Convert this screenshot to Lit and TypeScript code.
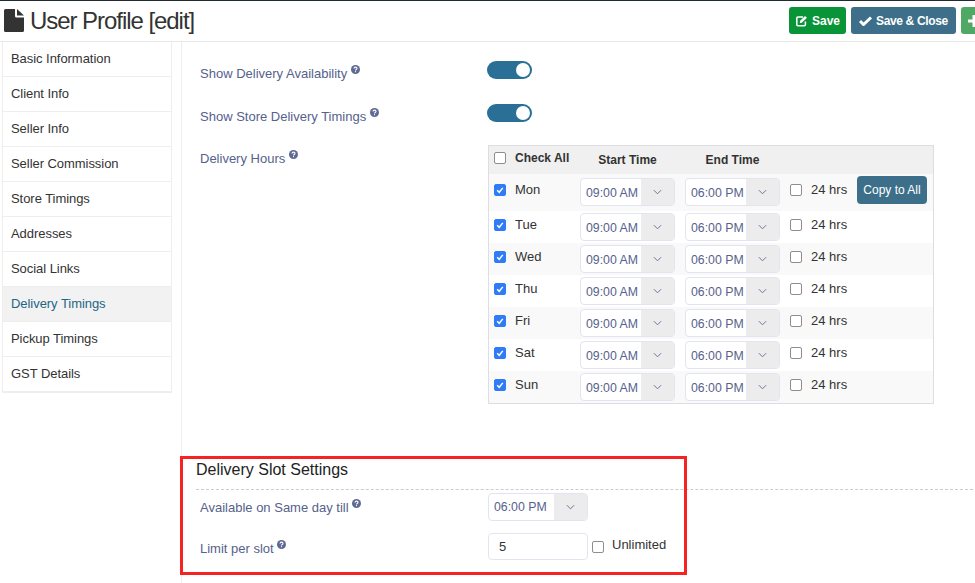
import { LitElement, html, css, svg } from "lit";
import { customElement } from "lit/decorators.js";

const tabs = [
  "Basic Information",
  "Client Info",
  "Seller Info",
  "Seller Commission",
  "Store Timings",
  "Addresses",
  "Social Links",
  "Delivery Timings",
  "Pickup Timings",
  "GST Details",
];
const days = ["Mon", "Tue", "Wed", "Thu", "Fri", "Sat", "Sun"];

const help = html`<svg class="help" viewBox="0 0 10 10" width="9" height="9">
  <circle cx="5" cy="5" r="5" fill="#5f6a94"></circle>
  <path d="M3.3 3.9C3.4 2.9 4.1 2.4 5 2.4c1 0 1.7.6 1.7 1.4 0 1.3-1.700 1.200-1.700 2.400" fill="none" stroke="#fff" stroke-width="1.2"></path>
  <rect x="4.4" y="6.8" width="1.2" height="1.2" fill="#fff"></rect>
</svg>`;

const chevron = svg`<path d="M1 1l4 4 4-4" fill="none" stroke="#6a7396" stroke-width="1.1"></path>`;

@customElement("app-root")
export class AppRoot extends LitElement {
  static styles = css`
    :host {
      display: block;
      width: 975px;
      height: 583px;
      overflow: hidden;
      position: relative;
      background: #fff;
      color: #333;
      font-family: "Liberation Sans", Arial, sans-serif;
      font-size: 13px;
      border-top: 1px solid #1f2d33;
      box-sizing: border-box;
    }
    .top {
      display: flex;
      align-items: center;
      height: 40px;
      border-bottom: 1px solid #e8e8e8;
      padding-left: 4px;
      box-sizing: content-box;
    }
    .doc {
      flex: none;
      margin-right: 6px;
      margin-top: -1px;
    }
    h1 {
      margin: 0;
      font-size: 24px;
      font-weight: 400;
      letter-spacing: -1.05px;
      color: #333;
      flex: 1;
      white-space: nowrap;
    }
    .actions {
      display: flex;
      gap: 5px;
      margin-right: -14px;
      margin-top: -1px;
    }
    .btn {
      display: flex;
      align-items: center;
      gap: 5px;
      height: 27px;
      padding: 0 6px 0 7px;
      border-radius: 3px;
      color: #fff;
      font-size: 12px;
      font-weight: 700;
      white-space: nowrap;
      box-sizing: border-box;
    }
    .save {
      background: #0a9438;
      width: 57px;
    }
    .close {
      background: #3d6f8a;
      width: 105px;
      padding-left: 8px;
      gap: 4px;
      letter-spacing: -0.35px;
    }
    .plus {
      background: #4fa863;
      width: 28px;
    }
    .body {
      display: flex;
    }
    .side {
      flex: none;
      width: 170px;
      margin-left: 2px;
      border: 1px solid #eee;
      border-top: 0;
      border-bottom-width: 2px;
      box-sizing: border-box;
      align-self: flex-start;
    }
    .tab {
      height: 35px;
      display: flex;
      align-items: center;
      padding-left: 8px;
      padding-bottom: 1px;
      box-sizing: border-box;
      border-bottom: 1px solid #eee;
      letter-spacing: -0.05px;
    }
    .tab:last-child {
      border-bottom: 0;
      height: 34px;
    }
    .tab.on {
      background: #f2f2f2;
      color: #1f6587;
    }
    .main {
      flex: none;
      width: 794px;
      height: 541px;
      margin-left: 9px;
      border-left: 1px solid #eee;
      box-sizing: border-box;
      padding-top: 19px;
      overflow: hidden;
    }
    .row {
      display: grid;
      grid-template-columns: 288px auto;
      padding-left: 18px;
    }
    .lab {
      color: #56618c;
      white-space: nowrap;
      line-height: 16px;
    }
    .help {
      vertical-align: 4px;
    }
    .toggle {
      width: 45px;
      height: 18px;
      border-radius: 9px;
      background: #2a7096;
      display: flex;
      justify-content: flex-end;
      align-items: center;
      padding-right: 2px;
      box-sizing: border-box;
      margin-left: -1px;
    }
    .toggle i {
      width: 14px;
      height: 14px;
      border-radius: 50%;
      background: #fff;
    }
    .r1 {
      height: 43px;
    }
    .r1 .lab {
      padding-top: 4px;
    }
    .r2 {
      height: 41px;
    }
    .r2 .lab {
      padding-top: 4px;
    }
    .r3 .lab {
      padding-top: 5px;
    }
    .table {
      width: 446px;
      height: 259px;
      border: 1px solid #dddde3;
      box-sizing: border-box;
    }
    .tr {
      display: grid;
      grid-template-columns: 26px 65px 105px 105px 21px 46px auto;
      height: 32px;
      align-items: center;
    }
    .tr.head {
      height: 28px;
      background: #f0f0f0;
      font-weight: 700;
      font-size: 12px;
    }
    .tr.first {
      height: 37px;
    }
    .tr.first .time {
      align-self: start;
      margin-top: 4px;
    }
    .tr .time span {
      padding-top: 1px;
    }
    .tr.alt {
      background: #f9f9f9;
    }
    .lead {
      margin-left: 5px;
    }
    .tr > .cb {
      margin-top: -4px;
    }
    .tr.first > .cb {
      margin-top: -5px;
    }
    .tr.head > .cb {
      margin-top: -5px;
    }
    .name,
    .hrs {
      margin-top: -6px;
    }
    .tr.first .name,
    .tr.first .hrs {
      margin-top: -7px;
    }
    .tr.head .name {
      margin-top: -5px;
    }
    .tr.head .th {
      text-align: center;
      width: 95px;
      margin-top: -1px;
    }
    .cb {
      width: 12px;
      height: 12px;
      border: 1px solid #8e8e8e;
      border-radius: 2px;
      box-sizing: border-box;
      background: #fff;
      display: block;
    }
    .cb.on {
      background: #2f7cf6;
      border-color: #2f7cf6;
      display: flex;
      align-items: center;
      justify-content: center;
    }
    .time {
      display: flex;
      width: 95px;
      height: 28px;
      border: 1px solid #e3e4ef;
      border-radius: 4px;
      box-sizing: border-box;
      overflow: hidden;
      color: #56618c;
      background: #fff;
      white-space: nowrap;
      font-size: 12.3px;
    }
    .time span {
      flex: 1;
      padding-left: 5px;
      line-height: 26px;
    }
    .time b {
      flex: none;
      width: 33px;
      background: #ececec;
      display: flex;
      align-items: center;
      justify-content: center;
    }
    .time.wide {
      width: 100px;
    }
    .copy {
      width: 70px;
      height: 28px;
      align-self: start;
      margin-top: 2px;
      border-radius: 4px;
      background: #3d6f8a;
      color: #fff;
      font-size: 12px;
      line-height: 28px;
      text-align: center;
      white-space: nowrap;
    }
    .slot {
      margin-top: 56px;
    }
    h2 {
      margin: 0 2px 0 14px;
      height: 30px;
      box-sizing: border-box;
      font-size: 16px;
      line-height: 20px;
      font-weight: 400;
      color: #222;
      border-bottom: 1px dashed #ccc;
    }
    .s1 {
      height: 43px;
      padding-top: 3px;
      box-sizing: border-box;
    }
    .s1 .lab {
      padding-top: 6px;
    }
    .s2 .lab {
      padding-top: 7px;
    }
    .limit {
      display: flex;
      align-items: flex-start;
    }
    .input {
      width: 100px;
      height: 27px;
      border: 1px solid #e3e4ef;
      border-radius: 4px;
      box-sizing: border-box;
      padding-left: 10px;
      line-height: 25px;
    }
    .limit .cb {
      margin: 8px 8px 0 4px;
    }
    .limit em {
      font-style: normal;
      margin-top: 4px;
    }
    .mark {
      position: absolute;
      left: 180px;
      top: 455px;
      width: 507px;
      height: 119px;
      border: 3px solid #f62323;
      box-sizing: border-box;
      pointer-events: none;
    }
  `;

  private tick() {
    return html`<span class="cb on lead"><svg viewBox="0 0 10 10" width="10" height="10"><path d="M2.2 5.3l2 2 3.6-4.4" fill="none" stroke="#fff" stroke-width="1.5"></path></svg></span>`;
  }

  private time(value: string, wide = false) {
    return html`<div class="time ${wide ? "wide" : ""}">
      <span>${value}</span>
      <b><svg viewBox="0 0 10 6" width="9" height="6">${chevron}</svg></b>
    </div>`;
  }

  render() {
    return html`
      <div class="top">
        <svg class="doc" viewBox="0 0 20 23" width="20" height="23">
          <path d="M0 1.5A1.5 1.5 0 0 1 1.5 0H11v7a1.5 1.5 0 0 0 1.5 1.5H20v13a1.5 1.5 0 0 1-1.500 1.500h-17A1.500 1.500 0 0 1 0 21.500z" fill="#333"></path>
          <path d="M13 0l7 6.500h-7z" fill="#333"></path>
        </svg>
        <h1>User Profile [edit]</h1>
        <div class="actions">
          <div class="btn save">
            <svg viewBox="0 0 14 14" width="14" height="14">
              <path d="M9 2H2.500A1.500 1.500 0 0 0 1 3.500v8A1.500 1.500 0 0 0 2.500 13h8A1.500 1.500 0 0 0 12 11.500V7.500" fill="none" stroke="#fff" stroke-width="2"></path>
              <path d="M5 7l6.500-6.500 2.500 2.500L7 9.500H5z" fill="#fff"></path>
            </svg>
            Save
          </div>
          <div class="btn close">
            <svg viewBox="0 0 13 10" width="13" height="10">
              <path d="M1 5l3.500 3.500L12 1.500" fill="none" stroke="#fff" stroke-width="3"></path>
            </svg>
            Save &amp; Close
          </div>
          <div class="btn plus">
            <svg viewBox="0 0 12 12" width="12" height="12">
              <path d="M4.500 0h3v4.500H12v3H7.500V12h-3V7.500H0v-3h4.500z" fill="#fff"></path>
            </svg>
          </div>
        </div>
      </div>
      <div class="body">
        <div class="side">
          ${tabs.map(
            (t) => html`<div class="tab ${t === "Delivery Timings" ? "on" : ""}">${t}</div>`
          )}
        </div>
        <div class="main">
          <div class="row r1">
            <div class="lab">Show Delivery Availability ${help}</div>
            <div class="toggle"><i></i></div>
          </div>
          <div class="row r2">
            <div class="lab">Show Store Delivery Timings ${help}</div>
            <div class="toggle"><i></i></div>
          </div>
          <div class="row r3">
            <div class="lab">Delivery Hours ${help}</div>
            <div class="table">
              <div class="tr head">
                <span class="cb lead"></span>
                <span class="name">Check All</span>
                <span class="th">Start Time</span>
                <span class="th">End Time</span>
              </div>
              ${days.map(
                (d, i) => html`<div class="tr ${i === 0 ? "first" : ""} ${i % 2 === 0 ? "alt" : ""}">
                  ${this.tick()}
                  <span class="name">${d}</span>
                  ${this.time("09:00 AM")} ${this.time("06:00 PM")}
                  <span class="cb"></span>
                  <span class="hrs">24 hrs</span>
                  ${i === 0 ? html`<div class="copy">Copy to All</div>` : ""}
                </div>`
              )}
            </div>
          </div>
          <div class="slot">
            <h2>Delivery Slot Settings</h2>
            <div class="row s1">
              <div class="lab">Available on Same day till ${help}</div>
              ${this.time("06:00 PM", true)}
            </div>
            <div class="row s2">
              <div class="lab">Limit per slot ${help}</div>
              <div class="limit">
                <div class="input">5</div>
                <span class="cb"></span>
                <em>Unlimited</em>
              </div>
            </div>
          </div>
        </div>
      </div>
      <div class="mark"></div>
    `;
  }
}
